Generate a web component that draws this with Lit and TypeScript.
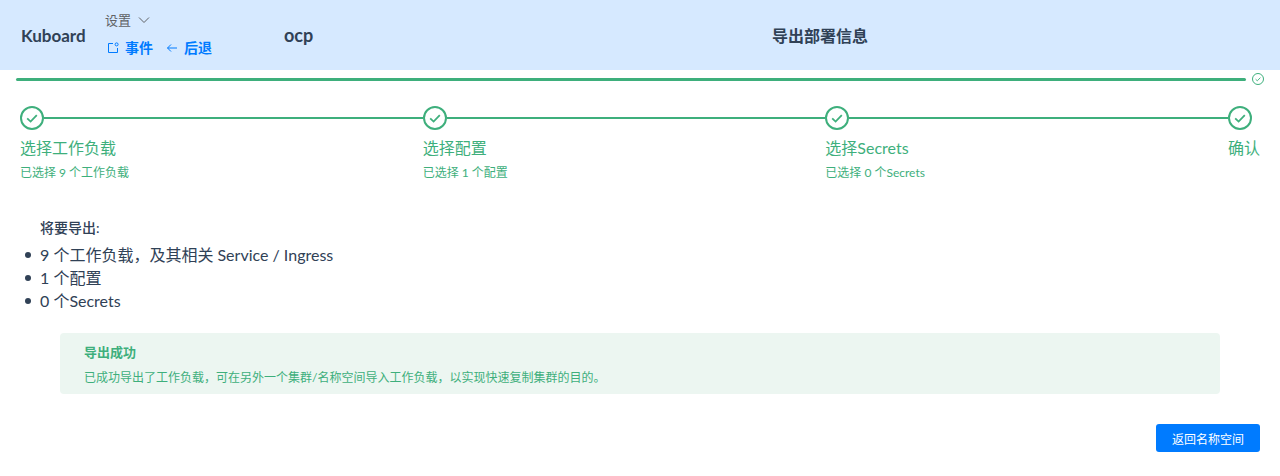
import { LitElement, html, css, svg } from "lit";
import { customElement } from "lit/decorators.js";

const check = svg`<path d="M7.2 12.4l3.400 3.200 6.200-6.400" fill="none" stroke="currentColor" stroke-width="1.800"/>`;

@customElement("app-root")
export class AppRoot extends LitElement {
  static styles = css`
    :host { display: block; width: 1280px; height: 476px; overflow: hidden; background: #fff; color: #303133;
      font-family: Lato, "Noto Sans CJK SC", sans-serif; }
    * { box-sizing: border-box; }
    header { height: 70px; background: #d6e9ff; display: flex; align-items: center; padding-left: 21px; color: #304156; }
    .brand { width: 85px; font-size: 17px; font-weight: 700; line-height: 20px; margin-top: 1px; }
    .nav { width: 178px; display: flex; flex-direction: column; gap: 10px; font-size: 13px; line-height: 18px; margin-top: -3px; }
    .settings { color: #606266; display: flex; align-items: center; gap: 7px; margin-left: -1px; }
    .links { display: flex; align-items: center; color: #007bff; font-weight: 700; font-size: 14px; }
    .links svg { display: block; flex: none; }
    .l1 { margin: 0 6px 0 1px; }
    .l2 { margin: 0 6px 0 13px; }
    .ns { width: 488px; font-size: 18px; font-weight: 700; }
    .title { width: 96px; font-size: 16px; font-weight: 700; white-space: nowrap; text-align: center; margin-top: -1px; }
    .progress { display: flex; align-items: center; height: 12px; margin: 3px 16px 0 16px; gap: 6px; color: #3eaf7c; }
    .bar { flex: 1; height: 3px; border-radius: 2px; background: #3eaf7c; }
    .progress svg { display: block; }
    .steps { display: flex; padding: 21px 20px 0; color: #3eaf7c; }
    .step { flex: 1 1 0; min-width: 0; }
    .step.last { flex: 0 0 32px; }
    .head { display: flex; align-items: center; height: 24px; }
    .head svg { display: block; flex: none; }
    .line { flex: 1; height: 2px; background: #3eaf7c; }
    .step-title { font-size: 16px; line-height: 24px; margin-top: 6px; white-space: nowrap; }
    .step-desc { font-size: 12px; line-height: 18px; margin-top: 4px; white-space: nowrap; }
    .summary { padding: 36px 20px 0; color: #304156; }
    .sum-title { font-size: 14px; font-weight: 500; line-height: 20px; padding-left: 20px; }
    ul { margin: 5px 0 0; padding: 0 0 0 5px; font-size: 16px; line-height: 23px; list-style: none; }
    li { display: flex; align-items: center; gap: 9px; }
    li::before { content: ""; flex: none; width: 6px; height: 6px; border-radius: 50%; background: #304156; }
    .alert { margin: 21px 60px 0; height: 61px; border-radius: 4px; background: #ecf6f1; padding: 9px 24px; color: #3eaf7c; }
    .alert-title { font-size: 13px; font-weight: 700; line-height: 20px; }
    .alert-desc { font-size: 12px; line-height: 18px; margin-top: 7px; }
    .actions { display: flex; justify-content: flex-end; padding: 30px 20px 0; }
    button { width: 104px; height: 28px; border: 0; border-radius: 3px; background: #007bff; color: #fff; font: inherit; font-size: 12px; padding: 0; }
  `;

  private circle(size: number, sw: number) {
    return html`<svg width=${size} height=${size} viewBox="0 0 24 24"><circle cx="12" cy="12" r=${12 - sw / 2} fill="none" stroke="currentColor" stroke-width=${sw}/>${check}</svg>`;
  }

  private step(title: string, desc: string, last = false) {
    return html`<div class="step ${last ? "last" : ""}">
      <div class="head">${this.circle(24, 2)}${last ? "" : html`<div class="line"></div>`}</div>
      <div class="step-title">${title}</div>
      ${desc ? html`<div class="step-desc">${desc}</div>` : ""}
    </div>`;
  }

  render() {
    return html`
      <header>
        <div class="brand">Kuboard</div>
        <div class="nav">
          <div class="settings">设置
            <svg width="12" height="12" viewBox="0 0 12 12"><path d="M1 3.500l5 5 5-5" fill="none" stroke="#606266" stroke-width="1"/></svg>
          </div>
          <div class="links">
            <svg class="l1" width="12" height="12" viewBox="0 0 12 12" fill="none" stroke="currentColor" stroke-width="1"><path d="M6 1.500H1.500v9h9V6"/><circle cx="9.600" cy="2.400" r="1.500"/></svg>事件
            <svg class="l2" width="12" height="12" viewBox="0 0 12 12" fill="none" stroke="currentColor" stroke-width="1"><path d="M11 6H1.500M5 2.500L1.500 6 5 9.500"/></svg>后退
          </div>
        </div>
        <div class="ns">ocp</div>
        <div class="title">导出部署信息</div>
      </header>
      <div class="progress">
        <div class="bar"></div>
        ${this.circle(12, 2)}
      </div>
      <div class="steps">
        ${this.step("选择工作负载", "已选择 9 个工作负载")}
        ${this.step("选择配置", "已选择 1 个配置")}
        ${this.step("选择Secrets", "已选择 0 个Secrets")}
        ${this.step("确认", "", true)}
      </div>
      <div class="summary">
        <div class="sum-title">将要导出:</div>
        <ul>
          <li>9 个工作负载，及其相关 Service / Ingress</li>
          <li>1 个配置</li>
          <li>0 个Secrets</li>
        </ul>
      </div>
      <div class="alert">
        <div class="alert-title">导出成功</div>
        <div class="alert-desc">已成功导出了工作负载，可在另外一个集群/名称空间导入工作负载，以实现快速复制集群的目的。</div>
      </div>
      <div class="actions"><button>返回名称空间</button></div>
    `;
  }
}
